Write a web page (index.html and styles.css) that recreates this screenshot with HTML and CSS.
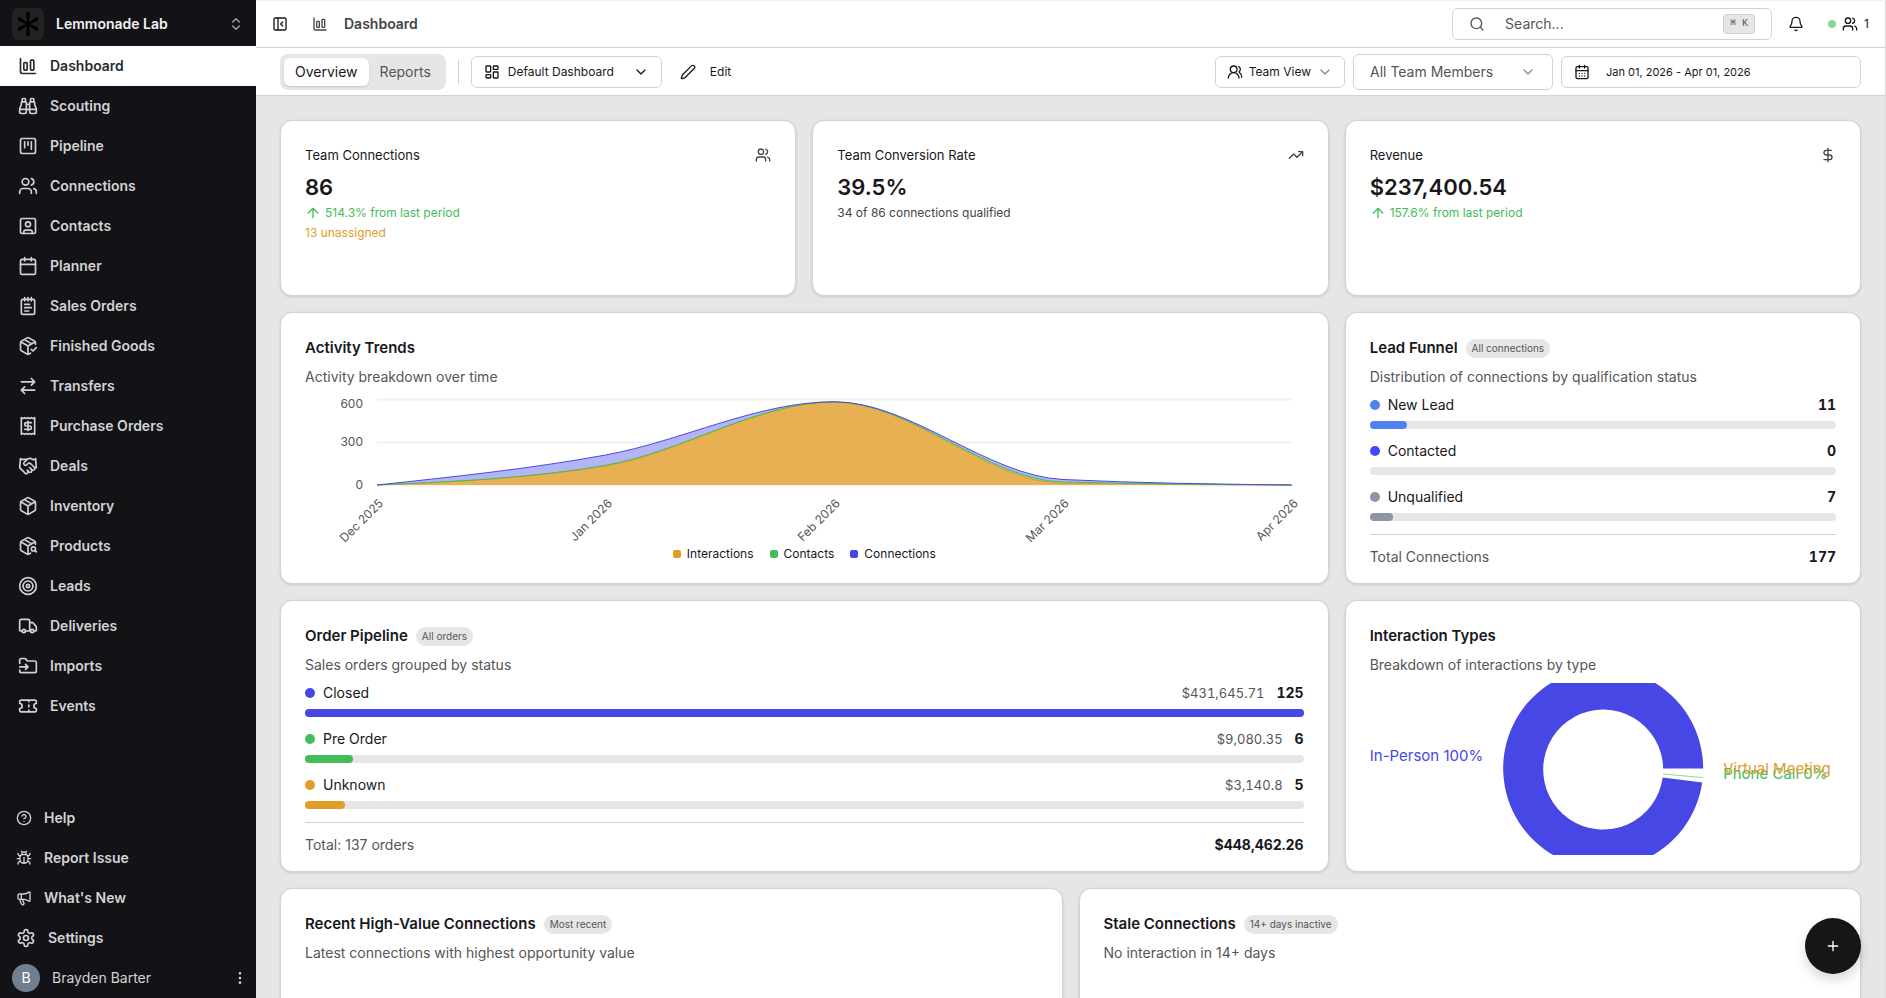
FILE: index.html
```
<!DOCTYPE html>
<html lang="en">
<head>
    <meta charset="UTF-8">
    <meta name="viewport" content="width=device-width, initial-scale=1.0">
    <title>Dashboard - Lemmonade Lab</title>
    <link rel="stylesheet" href="styles.css">
</head>
<body>
    <!-- icon set -->
    <svg class="sprite" aria-hidden="true">
        <symbol id="i-chart" viewBox="0 0 24 24"><path d="M3 3v16a2 2 0 0 0 2 2h16"/><rect x="15" y="5" width="4" height="12" rx="1"/><rect x="7" y="8" width="4" height="9" rx="1"/></symbol>
        <symbol id="i-binoculars" viewBox="0 0 24 24"><path d="M10 10h4M19 7V4a1 1 0 0 0-1-1h-2a1 1 0 0 0-1 1v3M20 21a2 2 0 0 0 2-2v-3.851c0-1.39-2-2.962-2-4.829V8a1 1 0 0 0-1-1h-4a1 1 0 0 0-1 1v11a2 2 0 0 0 2 2zM22 16H2M4 21a2 2 0 0 1-2-2v-3.851c0-1.39 2-2.962 2-4.829V8a1 1 0 0 1 1-1h4a1 1 0 0 1 1 1v11a2 2 0 0 1-2 2zM9 7V4a1 1 0 0 0-1-1H6a1 1 0 0 0-1 1v3"/></symbol>
        <symbol id="i-kanban" viewBox="0 0 24 24"><rect x="3" y="3" width="18" height="18" rx="2"/><path d="M8 7v7M12 7v4M16 7v9"/></symbol>
        <symbol id="i-users" viewBox="0 0 24 24"><path d="M16 21v-2a4 4 0 0 0-4-4H6a4 4 0 0 0-4 4v2"/><circle cx="9" cy="7" r="4"/><path d="M22 21v-2a4 4 0 0 0-3-3.87M16 3.13a4 4 0 0 1 0 7.75"/></symbol>
        <symbol id="i-users-round" viewBox="0 0 24 24"><path d="M18 21a8 8 0 0 0-16 0"/><circle cx="10" cy="8" r="5"/><path d="M22 20c0-3.37-2-6.5-4-8a5 5 0 0 0-.45-8.3"/></symbol>
        <symbol id="i-contact" viewBox="0 0 24 24"><rect x="3" y="3" width="18" height="18" rx="2"/><circle cx="12" cy="10" r="3"/><path d="M7 21v-2a2 2 0 0 1 2-2h6a2 2 0 0 1 2 2v2"/></symbol>
        <symbol id="i-calendar" viewBox="0 0 24 24"><path d="M8 2v4M16 2v4M3 10h18"/><rect x="3" y="4" width="18" height="18" rx="2"/></symbol>
        <symbol id="i-calendar-days" viewBox="0 0 24 24"><path d="M8 2v4M16 2v4M3 10h18M8 14h.01M12 14h.01M16 14h.01M8 18h.01M12 18h.01M16 18h.01"/><rect x="3" y="4" width="18" height="18" rx="2"/></symbol>
        <symbol id="i-notepad" viewBox="0 0 24 24"><path d="M8 2v4M12 2v4M16 2v4M8 10h6M8 14h8M8 18h5"/><rect x="4" y="4" width="16" height="18" rx="2"/></symbol>
        <symbol id="i-package-check" viewBox="0 0 24 24"><path d="m16 16 2 2 4-4M21 10V8a2 2 0 0 0-1-1.73l-7-4a2 2 0 0 0-2 0l-7 4A2 2 0 0 0 3 8v8a2 2 0 0 0 1 1.73l7 4a2 2 0 0 0 2 0l2-1.14M7.5 4.27l9 5.15M3.29 7 12 12l8.71-5M12 22V12"/></symbol>
        <symbol id="i-transfer" viewBox="0 0 24 24"><path d="m16 3 4 4-4 4M20 7H4M8 21l-4-4 4-4M4 17h16"/></symbol>
        <symbol id="i-receipt" viewBox="0 0 24 24"><path d="M4 2v20l2-1 2 1 2-1 2 1 2-1 2 1 2-1 2 1V2l-2 1-2-1-2 1-2-1-2 1-2-1-2 1ZM16 8h-6a2 2 0 1 0 0 4h4a2 2 0 1 1 0 4H8M12 17.5v-11"/></symbol>
        <symbol id="i-handshake" viewBox="0 0 24 24"><path d="m11 17 2 2a1 1 0 1 0 3-3"/><path d="m14 14 2.5 2.5a1 1 0 1 0 3-3l-3.88-3.88a3 3 0 0 0-4.24 0l-.88.88a1 1 0 1 1-3-3l2.81-2.81a5.79 5.79 0 0 1 7.06-.87l.47.28a2 2 0 0 0 1.42.25L21 4"/><path d="m21 3 1 11h-2M3 3 2 14l6.5 6.5a1 1 0 1 0 3-3M3 4h8"/></symbol>
        <symbol id="i-package" viewBox="0 0 24 24"><path d="M11 21.73a2 2 0 0 0 2 0l7-4A2 2 0 0 0 21 16V8a2 2 0 0 0-1-1.73l-7-4a2 2 0 0 0-2 0l-7 4A2 2 0 0 0 3 8v8a2 2 0 0 0 1 1.73zM12 22V12M3.29 7 12 12l8.71-5M7.5 4.27l9 5.15"/></symbol>
        <symbol id="i-package-search" viewBox="0 0 24 24"><path d="M21 10V8a2 2 0 0 0-1-1.73l-7-4a2 2 0 0 0-2 0l-7 4A2 2 0 0 0 3 8v8a2 2 0 0 0 1 1.73l7 4a2 2 0 0 0 2 0l2-1.14M7.5 4.27l9 5.15M3.29 7 12 12l8.71-5M12 22V12M20.27 17.27 22 19"/><circle cx="18.5" cy="15.5" r="2.5"/></symbol>
        <symbol id="i-target" viewBox="0 0 24 24"><circle cx="12" cy="12" r="10"/><circle cx="12" cy="12" r="6"/><circle cx="12" cy="12" r="2"/></symbol>
        <symbol id="i-truck" viewBox="0 0 24 24"><path d="M14 18V6a2 2 0 0 0-2-2H4a2 2 0 0 0-2 2v11a1 1 0 0 0 1 1h2M15 18H9M19 18h2a1 1 0 0 0 1-1v-3.65a1 1 0 0 0-.22-.624l-3.48-4.35A1 1 0 0 0 17.52 8H14"/><circle cx="17" cy="18" r="2"/><circle cx="7" cy="18" r="2"/></symbol>
        <symbol id="i-folder-input" viewBox="0 0 24 24"><path d="M2 9V5a2 2 0 0 1 2-2h3.9a2 2 0 0 1 1.69.9l.81 1.2a2 2 0 0 0 1.67.9H20a2 2 0 0 1 2 2v10a2 2 0 0 1-2 2H4a2 2 0 0 1-2-2v-1M2 13h10M9 16l3-3-3-3"/></symbol>
        <symbol id="i-ticket" viewBox="0 0 24 24"><path d="M2 9a3 3 0 0 1 0 6v2a2 2 0 0 0 2 2h16a2 2 0 0 0 2-2v-2a3 3 0 0 1 0-6V7a2 2 0 0 0-2-2H4a2 2 0 0 0-2 2ZM13 5v2M13 17v2M13 11v2"/></symbol>
        <symbol id="i-help" viewBox="0 0 24 24"><circle cx="12" cy="12" r="10"/><path d="M9.09 9a3 3 0 0 1 5.83 1c0 2-3 3-3 3M12 17h.01"/></symbol>
        <symbol id="i-bug" viewBox="0 0 24 24"><path d="m8 2 1.88 1.88M14.12 3.88 16 2M9 7.13v-1a3.003 3.003 0 1 1 6 0v1M12 20c-3.3 0-6-2.7-6-6v-3a4 4 0 0 1 4-4h4a4 4 0 0 1 4 4v3c0 3.3-2.7 6-6 6M12 20v-9M6.53 9C4.6 8.8 3 7.1 3 5M6 13H2M3 21c0-2.1 1.7-3.9 3.8-4M20.97 5c0 2.1-1.6 3.8-3.5 4M22 13h-4M17.2 17c2.1.1 3.8 1.9 3.8 4"/></symbol>
        <symbol id="i-megaphone" viewBox="0 0 24 24"><path d="M11 6a13 13 0 0 0 8.4-2.8A1 1 0 0 1 21 4v12a1 1 0 0 1-1.6.8A13 13 0 0 0 11 14H5a2 2 0 0 1-2-2V8a2 2 0 0 1 2-2zM6 14a12 12 0 0 0 2.4 7.2 2 2 0 0 0 3.2-2.4A8 8 0 0 1 10 14M8 6v8"/></symbol>
        <symbol id="i-settings" viewBox="0 0 24 24"><path d="M12.22 2h-.44a2 2 0 0 0-2 2v.18a2 2 0 0 1-1 1.73l-.43.25a2 2 0 0 1-2 0l-.15-.08a2 2 0 0 0-2.73.73l-.22.38a2 2 0 0 0 .73 2.73l.15.1a2 2 0 0 1 1 1.72v.51a2 2 0 0 1-1 1.74l-.15.09a2 2 0 0 0-.73 2.73l.22.38a2 2 0 0 0 2.73.73l.15-.08a2 2 0 0 1 2 0l.43.25a2 2 0 0 1 1 1.73V20a2 2 0 0 0 2 2h.44a2 2 0 0 0 2-2v-.18a2 2 0 0 1 1-1.73l.43-.25a2 2 0 0 1 2 0l.15.08a2 2 0 0 0 2.73-.73l.22-.39a2 2 0 0 0-.73-2.73l-.15-.08a2 2 0 0 1-1-1.74v-.5a2 2 0 0 1 1-1.74l.15-.09a2 2 0 0 0 .73-2.73l-.22-.38a2 2 0 0 0-2.73-.73l-.15.08a2 2 0 0 1-2 0l-.43-.25a2 2 0 0 1-1-1.73V4a2 2 0 0 0-2-2z"/><circle cx="12" cy="12" r="3"/></symbol>
        <symbol id="i-dots" viewBox="0 0 24 24"><circle cx="12" cy="12" r="1"/><circle cx="12" cy="5" r="1"/><circle cx="12" cy="19" r="1"/></symbol>
        <symbol id="i-updown" viewBox="0 0 24 24"><path d="m7 15 5 5 5-5M7 9l5-5 5 5"/></symbol>
        <symbol id="i-panel" viewBox="0 0 24 24"><rect x="3" y="3" width="18" height="18" rx="2"/><path d="M9 3v18M16 15l-3-3 3-3"/></symbol>
        <symbol id="i-layout" viewBox="0 0 24 24"><rect x="3" y="3" width="7" height="9" rx="1"/><rect x="14" y="3" width="7" height="5" rx="1"/><rect x="14" y="12" width="7" height="9" rx="1"/><rect x="3" y="16" width="7" height="5" rx="1"/></symbol>
        <symbol id="i-down" viewBox="0 0 24 24"><path d="m6 9 6 6 6-6"/></symbol>
        <symbol id="i-pencil" viewBox="0 0 24 24"><path d="M21.174 6.812a1 1 0 0 0-3.986-3.987L3.842 16.174a2 2 0 0 0-.5.83l-1.321 4.352a.5.5 0 0 0 .623.622l4.353-1.32a2 2 0 0 0 .83-.497z"/></symbol>
        <symbol id="i-search" viewBox="0 0 24 24"><circle cx="11" cy="11" r="8"/><path d="m21 21-4.3-4.3"/></symbol>
        <symbol id="i-bell" viewBox="0 0 24 24"><path d="M10.268 21a2 2 0 0 0 3.464 0M3.262 15.326A1 1 0 0 0 4 17h16a1 1 0 0 0 .74-1.673C19.41 13.956 18 12.499 18 8A6 6 0 0 0 6 8c0 4.499-1.411 5.956-2.738 7.326"/></symbol>
        <symbol id="i-trend" viewBox="0 0 24 24"><path d="m22 7-8.5 8.5-5-5L2 17M16 7h6v6"/></symbol>
        <symbol id="i-dollar" viewBox="0 0 24 24"><path d="M12 2v20M17 5H9.5a3.5 3.5 0 0 0 0 7h5a3.5 3.5 0 0 1 0 7H6"/></symbol>
        <symbol id="i-up" viewBox="0 0 24 24"><path d="m5 12 7-7 7 7M12 19V5"/></symbol>
        <symbol id="i-plus" viewBox="0 0 24 24"><path d="M5 12h14M12 5v14"/></symbol>
    </svg>

    <div class="app">
        <aside class="sidebar">
            <button class="workspace">
                <span class="workspace-logo">
                    <svg viewBox="-12 -12 24 24">
                        <g id="arms">
                            <path id="arm" d="M-.8 0-1.8-10Q-1.8-12 0-12T1.8-10L.8 0Z"/>
                            <use href="#arm" transform="rotate(60)"/>
                            <use href="#arm" transform="rotate(120)"/>
                        </g>
                        <use href="#arms" transform="rotate(180)"/>
                    </svg>
                </span>
                <span class="workspace-name">Lemmonade Lab</span>
                <svg class="icon"><use href="#i-updown"/></svg>
            </button>
            <nav class="nav">
                <a href="#" class="nav-item active"><svg class="icon"><use href="#i-chart"/></svg>Dashboard</a>
                <a href="#" class="nav-item"><svg class="icon"><use href="#i-binoculars"/></svg>Scouting</a>
                <a href="#" class="nav-item"><svg class="icon"><use href="#i-kanban"/></svg>Pipeline</a>
                <a href="#" class="nav-item"><svg class="icon"><use href="#i-users"/></svg>Connections</a>
                <a href="#" class="nav-item"><svg class="icon"><use href="#i-contact"/></svg>Contacts</a>
                <a href="#" class="nav-item"><svg class="icon"><use href="#i-calendar"/></svg>Planner</a>
                <a href="#" class="nav-item"><svg class="icon"><use href="#i-notepad"/></svg>Sales Orders</a>
                <a href="#" class="nav-item"><svg class="icon"><use href="#i-package-check"/></svg>Finished Goods</a>
                <a href="#" class="nav-item"><svg class="icon"><use href="#i-transfer"/></svg>Transfers</a>
                <a href="#" class="nav-item"><svg class="icon"><use href="#i-receipt"/></svg>Purchase Orders</a>
                <a href="#" class="nav-item"><svg class="icon"><use href="#i-handshake"/></svg>Deals</a>
                <a href="#" class="nav-item"><svg class="icon"><use href="#i-package"/></svg>Inventory</a>
                <a href="#" class="nav-item"><svg class="icon"><use href="#i-package-search"/></svg>Products</a>
                <a href="#" class="nav-item"><svg class="icon"><use href="#i-target"/></svg>Leads</a>
                <a href="#" class="nav-item"><svg class="icon"><use href="#i-truck"/></svg>Deliveries</a>
                <a href="#" class="nav-item"><svg class="icon"><use href="#i-folder-input"/></svg>Imports</a>
                <a href="#" class="nav-item"><svg class="icon"><use href="#i-ticket"/></svg>Events</a>
            </nav>
            <div class="nav nav-bottom">
                <a href="#" class="nav-item small"><svg class="icon"><use href="#i-help"/></svg>Help</a>
                <a href="#" class="nav-item small"><svg class="icon"><use href="#i-bug"/></svg>Report Issue</a>
                <a href="#" class="nav-item small"><svg class="icon"><use href="#i-megaphone"/></svg>What's New</a>
                <a href="#" class="nav-item settings"><svg class="icon"><use href="#i-settings"/></svg>Settings</a>
                <button class="user">
                    <span class="avatar">B</span>
                    <span class="user-name">Brayden Barter</span>
                    <svg class="icon"><use href="#i-dots"/></svg>
                </button>
            </div>
        </aside>

        <main class="main">
            <header class="topbar">
                <button class="icon-btn" aria-label="Collapse sidebar"><svg class="icon"><use href="#i-panel"/></svg></button>
                <div class="crumb"><svg class="icon"><use href="#i-chart"/></svg><span>Dashboard</span></div>
                <div class="topbar-right">
                    <label class="search">
                        <svg class="icon"><use href="#i-search"/></svg>
                        <input type="text" placeholder="Search..." aria-label="Search">
                        <kbd>⌘ K</kbd>
                    </label>
                    <button class="icon-btn" aria-label="Notifications"><svg class="icon"><use href="#i-bell"/></svg></button>
                    <button class="online" aria-label="Online users"><span class="online-dot"></span><svg class="icon"><use href="#i-users"/></svg>1</button>
                </div>
            </header>

            <div class="toolbar">
                <div class="tabs">
                    <button class="tab active">Overview</button>
                    <button class="tab">Reports</button>
                </div>
                <span class="divider"></span>
                <button class="btn dashboard-btn"><svg class="icon"><use href="#i-layout"/></svg><span>Default Dashboard</span><svg class="icon"><use href="#i-down"/></svg></button>
                <button class="edit-btn"><svg class="icon"><use href="#i-pencil"/></svg>Edit</button>
                <div class="toolbar-right">
                    <button class="btn team-btn"><svg class="icon"><use href="#i-users-round"/></svg>Team View<svg class="icon chevron"><use href="#i-down"/></svg></button>
                    <div class="members">
                        <select aria-label="Team members"><option>All Team Members</option></select>
                        <svg class="icon chevron"><use href="#i-down"/></svg>
                    </div>
                    <button class="btn date-btn"><svg class="icon"><use href="#i-calendar-days"/></svg>Jan 01, 2026 - Apr 01, 2026</button>
                </div>
            </div>

            <div class="content">
                <section class="card stat span-4">
                    <div class="stat-head"><h3>Team Connections</h3><svg class="icon"><use href="#i-users"/></svg></div>
                    <p class="stat-value">86</p>
                    <p class="stat-note up"><svg class="icon"><use href="#i-up"/></svg>514.3% from last period</p>
                    <p class="stat-note warn">13 unassigned</p>
                </section>
                <section class="card stat span-4">
                    <div class="stat-head"><h3>Team Conversion Rate</h3><svg class="icon"><use href="#i-trend"/></svg></div>
                    <p class="stat-value">39.5%</p>
                    <p class="stat-note">34 of 86 connections qualified</p>
                </section>
                <section class="card stat span-4">
                    <div class="stat-head"><h3>Revenue</h3><svg class="icon"><use href="#i-dollar"/></svg></div>
                    <p class="stat-value">$237,400.54</p>
                    <p class="stat-note up"><svg class="icon"><use href="#i-up"/></svg>157.6% from last period</p>
                </section>

                <section class="card span-8">
                    <div class="card-head"><h2>Activity Trends</h2></div>
                    <p class="card-desc">Activity breakdown over time</p>
                    <svg class="area-chart" viewBox="0 0 999 150">
                        <path class="grid" d="M72 6.5H987M72 49.5H987M72 92.5H987"/>
                        <path fill="#b4b5f4" d="M72 92C148 83.9 224.5 75.9 300.75 62C377 48.1 453 8.7 529.5 8.7C605.75 8.7 682 82.8 758.25 86.5C834.5 90.2 910.75 91.1 987 92Z"/>
                        <path fill="#8fd49c" d="M72 92C148 88.7 224.5 85.4 300.75 72.3C377 59.2 453 8.9 529.5 8.9C605.75 8.9 682 87 758.25 89C834.5 91 911 91.5 987 92Z"/>
                        <path fill="#e7b053" d="M72 92C148 88.8 224.5 85.7 300.75 73C377 60.3 453 9 529.5 9C605.75 9 682 89.5 758.25 90.5C834.5 91.5 911 91.75 987 92Z"/>
                        <path class="line" stroke="#e29d29" d="M72 92C148 88.8 224.5 85.7 300.75 73C377 60.3 453 9 529.5 9C605.75 9 682 89.5 758.25 90.5C834.5 91.5 911 91.75 987 92"/>
                        <path class="line" stroke="#42bd58" d="M72 92C148 88.7 224.5 85.4 300.75 72.3C377 59.2 453 8.9 529.5 8.9C605.75 8.9 682 87 758.25 89C834.5 91 911 91.5 987 92"/>
                        <path class="line" stroke="#4747e5" d="M72 92C148 83.9 224.5 75.9 300.75 62C377 48.1 453 8.7 529.5 8.7C605.75 8.7 682 82.8 758.25 86.5C834.5 90.2 910.75 91.1 987 92"/>
                        <g text-anchor="end">
                            <text x="58" y="15">600</text>
                            <text x="58" y="53">300</text>
                            <text x="58" y="96">0</text>
                            <text transform="translate(79 111) rotate(-45)">Dec 2025</text>
                            <text transform="translate(308 111) rotate(-45)">Jan 2026</text>
                            <text transform="translate(536 111) rotate(-45)">Feb 2026</text>
                            <text transform="translate(765 111) rotate(-45)">Mar 2026</text>
                            <text transform="translate(994 111) rotate(-45)">Apr 2026</text>
                        </g>
                    </svg>
                    <div class="legend">
                        <span><i class="orange"></i>Interactions</span>
                        <span><i class="green"></i>Contacts</span>
                        <span><i class="indigo"></i>Connections</span>
                    </div>
                </section>

                <section class="card span-4">
                    <div class="card-head"><h2>Lead Funnel</h2><span class="badge">All connections</span></div>
                    <p class="card-desc">Distribution of connections by qualification status</p>
                    <ul class="bars">
                        <li>
                            <div class="bar-row"><i class="dot blue"></i>New Lead<b>11</b></div>
                            <div class="track"><div class="fill blue" style="width: 8%"></div></div>
                        </li>
                        <li>
                            <div class="bar-row"><i class="dot violet"></i>Contacted<b>0</b></div>
                            <div class="track"></div>
                        </li>
                        <li>
                            <div class="bar-row"><i class="dot gray"></i>Unqualified<b>7</b></div>
                            <div class="track"><div class="fill gray" style="width: 5%"></div></div>
                        </li>
                    </ul>
                    <div class="total"><span>Total Connections</span><b>177</b></div>
                </section>

                <section class="card span-8">
                    <div class="card-head"><h2>Order Pipeline</h2><span class="badge">All orders</span></div>
                    <p class="card-desc">Sales orders grouped by status</p>
                    <ul class="bars">
                        <li>
                            <div class="bar-row"><i class="dot indigo"></i>Closed<span class="amount">$431,645.71</span><b>125</b></div>
                            <div class="track"><div class="fill indigo" style="width: 100%"></div></div>
                        </li>
                        <li>
                            <div class="bar-row"><i class="dot green"></i>Pre Order<span class="amount">$9,080.35</span><b>6</b></div>
                            <div class="track"><div class="fill green" style="width: 4.8%"></div></div>
                        </li>
                        <li>
                            <div class="bar-row"><i class="dot orange"></i>Unknown<span class="amount">$3,140.8</span><b>5</b></div>
                            <div class="track"><div class="fill orange" style="width: 4%"></div></div>
                        </li>
                    </ul>
                    <div class="total"><span>Total: 137 orders</span><b>$448,462.26</b></div>
                </section>

                <section class="card span-4">
                    <div class="card-head"><h2>Interaction Types</h2></div>
                    <p class="card-desc">Breakdown of interactions by type</p>
                    <svg class="donut" viewBox="0 0 466 172">
                        <path fill="#4747e5" d="M333 85.5A100 100 0 1 0 332 99.5L292.5 94.4A60 60 0 1 1 293 85.5Z"/>
                        <path stroke="#42bd58" stroke-width=".6" d="m293 91 39.5 3.5"/>
                        <text x="113" y="78" text-anchor="end" fill="#4747e5">In-Person 100%</text>
                        <text x="353" y="96" fill="#42bd58">Phone Call 0%</text>
                        <text x="353" y="91" fill="#e29d29">Virtual Meeting</text>
                    </svg>
                </section>

                <section class="card span-6">
                    <div class="card-head"><h2>Recent High-Value Connections</h2><span class="badge">Most recent</span></div>
                    <p class="card-desc">Latest connections with highest opportunity value</p>
                </section>
                <section class="card span-6">
                    <div class="card-head"><h2>Stale Connections</h2><span class="badge">14+ days inactive</span></div>
                    <p class="card-desc">No interaction in 14+ days</p>
                </section>
            </div>
        </main>
    </div>

    <button class="fab" aria-label="Add"><svg class="icon"><use href="#i-plus"/></svg></button>
</body>
</html>
```
FILE: styles.css
```
* {
    box-sizing: border-box;
}

body {
    margin: 0;
    font-family: Inter, "Liberation Sans", sans-serif;
    font-size: 14px;
    line-height: 20px;
    color: #18181b;
    background-color: #e6e6e6;
}

h2, h3, p, ul {
    margin: 0;
    padding: 0;
}

button, input, select {
    font: inherit;
    color: inherit;
    background: none;
    border: none;
    margin: 0;
    padding: 0;
}

button {
    display: flex;
    align-items: center;
    cursor: pointer;
}

a {
    text-decoration: none;
}

.sprite {
    display: none;
}

.icon {
    width: 16px;
    height: 16px;
    flex-shrink: 0;
    fill: none;
    stroke: currentColor;
    stroke-width: 2;
    stroke-linecap: round;
    stroke-linejoin: round;
}

.app {
    display: flex;
    height: 100vh;
}

/* sidebar */
.sidebar {
    width: 256px;
    flex-shrink: 0;
    display: flex;
    flex-direction: column;
    background-color: #131217;
    color: #d2d2d4;
}

.workspace {
    height: 46px;
    padding: 2px 12px 0;
    gap: 12px;
    font-weight: 600;
    color: #f2f2f2;
}

.workspace .icon {
    color: #a5a5a8;
}

.workspace-logo {
    width: 32px;
    height: 32px;
    padding: 4px;
    border-radius: 6px;
    background-color: #222222;
}

.workspace-logo svg {
    display: block;
    width: 24px;
    height: 24px;
    fill: #000;
}

.workspace-name {
    flex: 1;
    text-align: left;
}

.nav-item {
    display: flex;
    align-items: center;
    gap: 12px;
    height: 40px;
    padding: 0 18px;
    font-weight: 600;
    color: #d2d2d4;
}

.nav-item .icon {
    width: 20px;
    height: 20px;
}

.nav-item.active {
    background-color: #ffffff;
    color: #2b2b2f;
}

.nav-bottom {
    margin-top: auto;
}

.nav-item.small {
    padding: 0 16px;
}

.nav-item.small .icon {
    width: 16px;
    height: 16px;
}

.nav-item.settings {
    padding: 0 16px;
}

.user {
    width: 100%;
    height: 40px;
    padding: 0 8px 0 12px;
    gap: 12px;
}

.avatar {
    width: 28px;
    height: 28px;
    line-height: 28px;
    border-radius: 50%;
    background-color: #708090;
    color: #ffffff;
    text-align: center;
}

.user-name {
    flex: 1;
    text-align: left;
}

/* top bars */
.main {
    flex: 1;
    min-width: 0;
    display: flex;
    flex-direction: column;
    border-top: 1px solid #f0f0f0;
    border-right: 1px solid #dcdcdc;
}

.topbar, .toolbar {
    display: flex;
    align-items: center;
    flex-shrink: 0;
    height: 48px;
    padding: 0 24px;
    background-color: #ffffff;
    border-bottom: 1px solid #d2d2d2;
}

.topbar {
    height: 47px;
    padding: 0 16px;
}

.crumb {
    display: flex;
    align-items: center;
    gap: 16px;
    margin-left: 24px;
    font-weight: 600;
    color: #444447;
}

.topbar-right, .toolbar-right {
    display: flex;
    align-items: center;
    margin-left: auto;
}

.topbar-right {
    gap: 16px;
}

.toolbar-right {
    gap: 8px;
}

.search {
    display: flex;
    align-items: center;
    gap: 20px;
    width: 320px;
    height: 32px;
    padding: 0 16px;
    border: 1px solid #d2d2d2;
    border-radius: 6px;
    color: #555558;
}

.search input {
    flex: 1;
    min-width: 0;
    outline: none;
}

.search input::placeholder {
    color: #555558;
    opacity: 1;
}

kbd {
    padding: 0 6px;
    border: 1px solid #cfcfcf;
    border-radius: 4px;
    background-color: #e6e6e6;
    font-family: "Liberation Mono", "DejaVu Sans Mono", monospace;
    font-size: 10px;
    line-height: 18px;
}

.online {
    gap: 6px;
    margin-left: 8px;
    font-size: 12px;
}

.online-dot {
    width: 8px;
    height: 8px;
    border-radius: 50%;
    background-color: #8bd797;
}

.tabs {
    display: flex;
    padding: 4px;
    border-radius: 8px;
    background-color: #e6e6e6;
}

.tab {
    height: 28px;
    padding: 0 11px;
    border-radius: 6px;
    color: #555558;
}

.tab.active {
    background-color: #ffffff;
    color: #18181b;
    box-shadow: 0 1px 2px rgba(0, 0, 0, 0.15);
}

.divider {
    width: 1px;
    height: 24px;
    margin: 0 12px;
    background-color: #d2d2d2;
}

.btn {
    height: 32px;
    padding: 0 12px;
    gap: 8px;
    border: 1px solid #d2d2d2;
    border-radius: 6px;
    background-color: #ffffff;
    font-size: 12px;
}

.dashboard-btn {
    width: 191px;
}

.dashboard-btn span {
    flex: 1;
    text-align: left;
}

.edit-btn {
    gap: 14px;
    margin-left: 18px;
    font-size: 12px;
}

.team-btn {
    padding: 0 11px;
    gap: 6px;
}

.chevron {
    color: #8c8c90;
}

.members {
    position: relative;
    width: 200px;
    height: 36px;
    border: 1px solid #d2d2d2;
    border-radius: 6px;
}

.members select {
    width: 100%;
    height: 100%;
    padding: 0 16px;
    appearance: none;
    color: #555558;
}

.members .chevron {
    position: absolute;
    right: 16px;
    top: 9px;
    pointer-events: none;
}

.date-btn {
    width: 300px;
    gap: 16px;
    font-size: 11px;
}

/* cards */
.content {
    flex: 1;
    min-height: 0;
    display: grid;
    grid-template-columns: repeat(12, 1fr);
    grid-template-rows: 176px;
    grid-auto-rows: 272px;
    gap: 16px;
    padding: 24px;
    overflow-y: auto;
    scrollbar-width: none;
}

.card {
    min-width: 0;
    padding: 24px;
    border: 1px solid #d2d2d2;
    border-radius: 12px;
    background-color: #ffffff;
    box-shadow: 0 1px 3px rgba(0, 0, 0, 0.12);
}

.span-4 {
    grid-column: span 4;
}

.span-6 {
    grid-column: span 6;
}

.span-8 {
    grid-column: span 8;
}

.stat-head {
    display: flex;
    align-items: center;
    justify-content: space-between;
}

.stat-head h3 {
    font-size: 13px;
    font-weight: 400;
}

.stat-head .icon {
    color: #444447;
}

.stat-value {
    margin-top: 6px;
    font-size: 22px;
    line-height: 32px;
    font-weight: 600;
}

.stat-note {
    display: flex;
    align-items: center;
    gap: 4px;
    font-size: 12px;
    color: #444447;
}

.stat-note.up {
    color: #42bd58;
}

.stat-note.warn {
    color: #e29d29;
}

.card-head {
    display: flex;
    align-items: center;
    gap: 8px;
    height: 22px;
}

.card h2 {
    font-size: 15px;
    font-weight: 600;
}

.badge {
    padding: 0 6px;
    border-radius: 10px;
    background-color: #e6e6e6;
    color: #555558;
    font-size: 10px;
    line-height: 19px;
}

.card-desc {
    margin-top: 8px;
    color: #555558;
}

.area-chart {
    display: block;
    width: 100%;
    height: 150px;
    margin-top: 6px;
    overflow: visible;
}

.area-chart text {
    font-size: 12px;
    fill: #555558;
}

.area-chart .grid {
    stroke: #f1f1f1;
    stroke-width: 2;
}

.area-chart .line {
    fill: none;
}

.legend {
    display: flex;
    justify-content: center;
    gap: 16px;
    font-size: 12px;
    line-height: 22px;
}

.legend span {
    display: flex;
    align-items: center;
    gap: 6px;
}

.legend i {
    width: 8px;
    height: 8px;
    border-radius: 2px;
}

.bars {
    display: flex;
    flex-direction: column;
    gap: 12px;
    margin-top: 8px;
    list-style: none;
}

.bar-row {
    display: flex;
    align-items: center;
}

.dot {
    width: 10px;
    height: 10px;
    margin-right: 8px;
    border-radius: 50%;
}

.bar-row b {
    margin-left: auto;
    font-weight: 700;
    font-variant-numeric: tabular-nums;
}

.amount {
    margin-left: auto;
    font-size: 13px;
    color: #555558;
    font-variant-numeric: tabular-nums;
}

.amount + b {
    margin-left: 12px;
}

.track {
    height: 8px;
    margin-top: 6px;
    border-radius: 4px;
    background-color: #e6e6e6;
}

.fill {
    height: 8px;
    border-radius: 4px;
}

.blue {
    background-color: #4f82ec;
}

.violet {
    background-color: #4545fa;
}

.gray {
    background-color: #8f94a6;
}

.indigo {
    background-color: #4747e5;
}

.green {
    background-color: #42bd58;
}

.orange {
    background-color: #e29d29;
}

.total {
    display: flex;
    justify-content: space-between;
    margin-top: 13px;
    padding-top: 12px;
    border-top: 1px solid #d2d2d2;
    color: #555558;
}

.total b {
    color: #18181b;
    font-weight: 700;
    font-variant-numeric: tabular-nums;
}

.donut {
    display: block;
    width: 100%;
    height: 172px;
    margin-top: 8px;
    overflow: hidden;
}

.donut text {
    font-size: 15px;
}

.fab {
    position: fixed;
    right: 25px;
    bottom: 24px;
    width: 56px;
    height: 56px;
    justify-content: center;
    border-radius: 50%;
    background-color: #161616;
    color: #ffffff;
    box-shadow: 0 6px 12px rgba(0, 0, 0, 0.15);
}
```
